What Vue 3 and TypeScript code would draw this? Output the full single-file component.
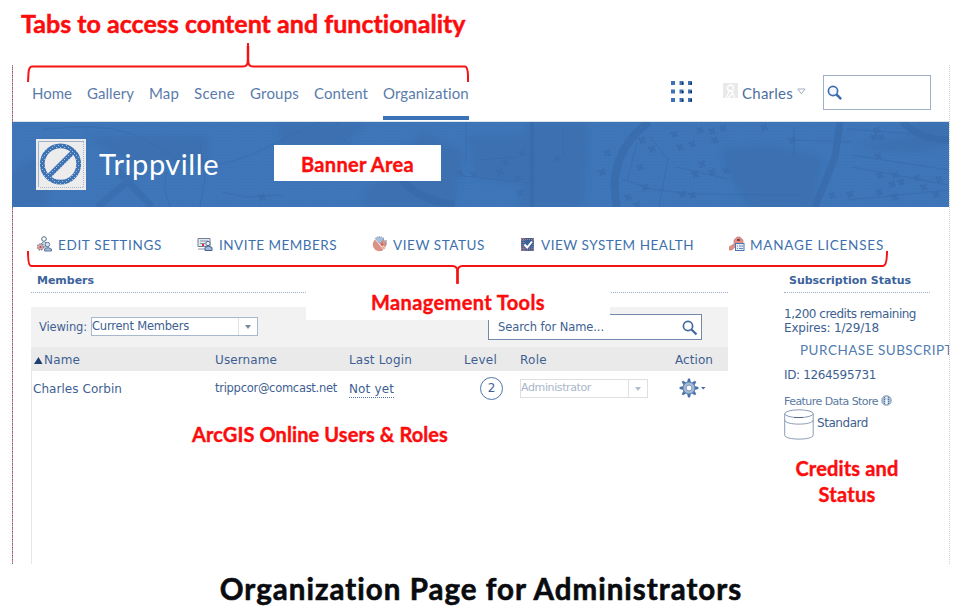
<script setup lang="ts">
interface Label {
  text: string
  width: number
}

const tabs: Label[] = [
  { text: 'Home', width: 40 },
  { text: 'Gallery', width: 47 },
  { text: 'Map', width: 30 },
  { text: 'Scene', width: 41 },
  { text: 'Groups', width: 49 },
  { text: 'Content', width: 54 },
  { text: 'Organization', width: 86 },
]

const columns: Label[] = [
  { text: 'Name', width: 36 },
  { text: 'Username', width: 62 },
  { text: 'Last Login', width: 63 },
  { text: 'Level', width: 33 },
  { text: 'Role', width: 27 },
  { text: 'Action', width: 38 },
]

const dots = [0, 1, 2].flatMap((r) => [0, 1, 2].map((c) => ({ x: c * 8.5, y: r * 8.5 })))
const teeth = [0, 45, 90, 135, 180, 225, 270, 315]

// Scattered tree clusters of the banner's map artwork
const trees: [number, number][] = [
  [448, 51], [462, 52], [488, 50], [508, 71], [630, 18], [640, 27], [628, 45],
  [633, 65], [625, 83], [662, 12], [668, 25], [680, 22], [688, 8], [700, 9], [711, 6], [703, 18], [690, 42],
  [700, 50], [683, 52], [714, 48], [752, 5], [780, 18], [865, 8], [862, 15], [869, 15], [866, 34], [868, 53],
  [883, 53], [889, 60], [880, 62], [905, 56], [912, 65], [927, 57], [820, 73], [838, 72], [867, 70], [883, 75],
  [924, 72], [616, 75], [670, 72], [680, 73], [510, 31], [494, 40], [506, 56], [545, 36], [595, 31], [603, 61],
  [250, 75], [590, 50],
]

// Spreads the letters so that a label fills its set width
const vFit = {
  mounted(el: HTMLElement, binding: { value: number }) {
    const natural = el.getBoundingClientRect().width
    const count = (el.textContent ?? '').trim().length
    el.style.letterSpacing = `${(binding.value - natural) / count}px`
  },
}
</script>

<template>
  <main class="slide">
    <h1 class="lead"><span v-fit="445">Tabs to access content and functionality</span></h1>

    <section class="frame">
      <header class="top">
        <nav class="tabs">
          <a v-for="tab in tabs" :key="tab.text" class="tab" :class="{ active: tab.text === 'Organization' }">
            <span v-fit="tab.width">{{ tab.text }}</span>
          </a>
        </nav>
        <svg class="apps" width="22" height="22" viewBox="0 0 22 22">
          <g v-for="(d, i) in dots" :key="i">
            <rect :x="d.x" :y="d.y" width="4" height="4" fill="#3d73b4" />
            <rect v-if="d.x" :x="d.x + 2.5" :y="d.y + 1.5" width="1.5" height="2" fill="#12244c" />
          </g>
        </svg>
        <div class="user">
          <svg width="15" height="15" viewBox="0 0 15 15">
            <rect width="15" height="15" fill="#e9e9e9" />
            <circle cx="7.5" cy="5" r="3" fill="none" stroke="#fff" stroke-width="1.3" />
            <path d="M3 15 6 8.5h3L12 15M5 15l5-5" fill="none" stroke="#fff" stroke-width="1.2" />
          </svg>
          <span v-fit="51">Charles</span>
          <svg width="9" height="7" viewBox="0 0 9 7">
            <path d="M.8 1h7.2L4.4 5.8z" fill="#fff" stroke="#a5adc0" />
          </svg>
        </div>
        <div class="search">
          <svg width="16" height="16" viewBox="0 0 16 16">
            <circle cx="6" cy="6" r="4.6" fill="#f5f8fc" stroke="#3d6fae" stroke-width="1.7" />
            <path d="m9.5 9.5 4.7 4.7" stroke="#3d6fae" stroke-width="2.5" />
          </svg>
        </div>
      </header>

      <div class="banner">
        <svg class="art" width="937" height="85" viewBox="0 0 937 85">
          <defs>
            <pattern id="grain" width="3" height="3" patternUnits="userSpaceOnUse">
              <rect width="1" height="1" fill="#376ba8" />
            </pattern>
            <g id="tree" fill="#3a6cab">
              <circle r="1.7" /><circle cx="-2.4" cy="-1" r="1.4" /><circle cx="2.3" cy="1.5" r="1.5" />
              <circle cx="1.5" cy="-2.2" r="1.4" /><circle cx="-1" cy="2.6" r="1.3" />
            </g>
            <filter id="soft"><feGaussianBlur stdDeviation="3" /></filter>
          </defs>
          <rect width="937" height="85" fill="url(#grain)" opacity=".4" />
          <g fill="#3a6dac" opacity=".6" filter="url(#soft)">
            <path d="M0 50 35 30v55H0zM75 15h120v28h-75zM265 0h90l-25 22h-60zM350 75 410 10l40 20-8 55h-88z" />
            <path d="M455 14h60V0h60v44l-50 20-60-8zM710 28l50-4 50 12-10 49h-65l-20-40zM845 25l55-10v-15h37v22l-35 8z" />
            <path d="M520 38h55l-5 47h-64z" />
          </g>
          <g fill="none" stroke="#386aaa" opacity=".7">
            <path d="M85 85 125 52M105 48l35 37" stroke-width="7" opacity=".7" />
            <path d="M388 55c10 15 30 25 55 28M605 85c-8-35 5-66 32-85" stroke-width="8" />
            <path d="M828 0 823 35 803 85M890 0c15 14 30 18 47 18" stroke-width="7" />
            <path d="M520 0v85" stroke-width="4" />
            <path
              d="M155 50c-5 15 0 25 3 35M188 20l5 35-5 30M210 70l25 5 35-2M454 0v40M465 38l40-3M450 54l50 5 20 2M551 5v30M610 57l30 10 40 5 110 1M638 15l18 22-9 48M625 20l-10 40M665 45l50 12M782 5v30M780 18l60 2M835 7l70 5M840 33l97 15M840 45l97 18M835 78l102-10"
            />
            <path d="M30 8q80-12 120 20t110-5 65-20M330 16q15 16 50 12" stroke-width="1.5" opacity=".6" />
          </g>
          <use v-for="(t, i) in trees" :key="i" href="#tree" :x="t[0]" :y="t[1]" opacity=".8" />
        </svg>
        <svg class="logo" width="50" height="51" viewBox="0 0 50 51">
          <defs>
            <pattern id="speck" width="4" height="4" patternUnits="userSpaceOnUse">
              <rect width="1" height="1" fill="#a5bedb" /><rect x="2" y="2" width="1" height="1" fill="#a5bedb" />
            </pattern>
          </defs>
          <rect width="50" height="51" fill="#ececed" />
          <path d="M2.5 48V2.5H48" fill="none" stroke="#9fb3ca" />
          <path d="M47.5 3v45.500H3" fill="none" stroke="#a9b7c9" stroke-dasharray="1 1" />
          <g fill="none" stroke-width="4.800">
            <g stroke="#3d73b3"><circle cx="24.500" cy="25" r="18.200" /><path d="M37 13 12 38" /></g>
            <g stroke="url(#speck)"><circle cx="24.500" cy="25" r="18.200" /><path d="M37 13 12 38" /></g>
          </g>
        </svg>
        <h2 class="org"><span v-fit="120">Trippville</span></h2>
        <div class="tag"><span v-fit="113">Banner Area</span></div>
      </div>

      <div class="tools">
        <a class="tool">
          <svg width="17" height="16" viewBox="0 0 17 16">
            <circle cx="8" cy="3" r="2.300" fill="#fff" stroke="#526987" />
            <path d="M5 8 8 5l3 3v3H5z" fill="#c4d0df" stroke="#8292ab" />
            <circle cx="11.500" cy="8.500" r="2.200" fill="#dae4ef" stroke="#6179a0" />
            <path d="M8.500 15v-2q3.500-3 7 0v2z" fill="#a6b9d2" stroke="#6179a0" />
            <circle cx="4.500" cy="11" r="3" fill="#e7a6a0" stroke="#83879f" stroke-width="1.500" stroke-dasharray="1.500 1" />
            <circle cx="4.500" cy="11" r="1" fill="#a54e50" />
          </svg>
          <span v-fit="104">EDIT SETTINGS</span>
        </a>
        <a class="tool">
          <svg width="17" height="16" viewBox="0 0 17 16">
            <path d="M1 2.500h12v8H1z" fill="#e4e9f0" stroke="#718098" />
            <path d="M3 5h8M3 7.500h5M1 13h7" stroke="#8393ab" />
            <circle cx="11" cy="7.500" r="2.200" fill="#e7eef6" stroke="#4f668e" />
            <path d="M8 14.500v-3q3-3 7 0v3z" fill="#a3b9d3" stroke="#3f6595" />
            <path d="M5 9h2" stroke="#e52d2d" stroke-width="2" />
          </svg>
          <span v-fit="118">INVITE MEMBERS</span>
        </a>
        <a class="tool">
          <svg width="16" height="16" viewBox="0 0 16 16">
            <circle cx="7.500" cy="8.500" r="6.700" fill="#dc9185" />
            <path d="M7.500 8.500 3 2.500Q7.500-1 12 2.500z" fill="#a6c0da" stroke="#6585ab" stroke-dasharray="1 1" />
            <path d="m3 3 9 11M7.500 8.500 14 12" stroke="#f4e7e4" stroke-width="1" />
            <path d="M9 7.500h2v2H9z" fill="#e54b43" />
            <path d="M14 4v5" stroke="#73809c" />
          </svg>
          <span v-fit="92">VIEW STATUS</span>
        </a>
        <a class="tool">
          <svg width="14" height="14" viewBox="0 0 14 14">
            <rect width="13" height="13" fill="#3b639b" />
            <path d="M0 12h13M0 10h13M0 1.500h13M1 0v13M3 0v13M12 0v13" stroke="#cf807a" stroke-width=".9" stroke-dasharray="1 1" />
            <path d="m3.500 6.500 2.700 3L11 3.500" fill="none" stroke="#fff" stroke-width="2" />
          </svg>
          <span v-fit="153">VIEW SYSTEM HEALTH</span>
        </a>
        <a class="tool">
          <svg width="16" height="16" viewBox="0 0 16 16">
            <path d="M5 8V4l3-3h3l3 3v4l-3 2H7l-4 4H0v-3z" fill="#df8e83" stroke="#c78078" stroke-width=".7" />
            <path d="M8 4h3" stroke="#56313e" stroke-width="1.500" />
            <rect x="6.500" y="7.500" width="8.500" height="7" fill="#e8eff7" stroke="#4b78b0" />
            <path d="M8 10h1m1 0h4M8 12.500h1m1 0h4" stroke="#648abb" />
          </svg>
          <span v-fit="134">MANAGE LICENSES</span>
        </a>
      </div>

      <div class="body">
        <section class="members">
          <h3 class="heading"><span v-fit="57">Members</span></h3>
          <div class="filters">
            <label v-fit="48">Viewing:</label>
            <div class="select">
              <span v-fit="97">Current Members</span>
              <i class="drop"></i>
            </div>
            <div class="find">
              <span v-fit="106">Search for Name...</span>
              <svg width="16" height="16" viewBox="0 0 16 16">
                <circle cx="6" cy="6" r="4.600" fill="none" stroke="#446a9f" stroke-width="1.700" />
                <path d="m9.500 9.500 5 5" stroke="#446a9f" stroke-width="2.300" />
              </svg>
            </div>
          </div>
          <div class="row head">
            <div v-for="(c, i) in columns" :key="c.text" class="cell">
              <svg v-if="i === 0" width="9" height="9" viewBox="0 0 9 9"><path d="M4.500 1 8.500 8H0z" fill="#1d3c70" /></svg>
              <span v-fit="c.width">{{ c.text }}</span>
            </div>
          </div>
          <div class="records">
            <div class="row">
              <div class="cell person"><span v-fit="89">Charles Corbin</span></div>
              <div class="cell"><span v-fit="122">trippcor@comcast.net</span></div>
              <div class="cell"><span v-fit="45" class="login">Not yet</span></div>
              <div class="cell level"><span class="ring">2</span></div>
              <div class="cell">
                <div class="select role"><span v-fit="70">Administrator</span><i class="drop"></i></div>
              </div>
              <div class="cell action">
                <svg width="27" height="20" viewBox="0 0 27 20">
                  <g fill="#4973aa" stroke="#36649d" stroke-width=".4">
                    <path v-for="a in teeth" :key="a" d="M8.300 4.500 9.200.8h1.600l.9 3.700z" :transform="`rotate(${a} 10 10)`" />
                  </g>
                  <circle cx="10" cy="10" r="4.600" fill="#fff" stroke="#a9bbd3" stroke-width="3.200" />
                  <circle cx="10" cy="10" r="6" fill="none" stroke="#4973aa" stroke-width=".9" />
                  <circle cx="10" cy="10" r="2.900" fill="#fff" stroke="#4973aa" stroke-width=".7" />
                  <path d="M22 9h4.500l-2.200 2.500z" fill="#426fa6" />
                </svg>
              </div>
            </div>
          </div>
        </section>

        <aside class="status">
          <h3 class="heading"><span v-fit="122">Subscription Status</span></h3>
          <p class="credits"><span v-fit="132">1,200 credits remaining</span></p>
          <p class="expires"><span v-fit="95">Expires: 1/29/18</span></p>
          <p class="buy"><span v-fit="153">PURCHASE SUBSCRIPT</span></p>
          <p class="ident"><span v-fit="92">ID: 1264595731</span></p>
          <p class="store">
            <span v-fit="94">Feature Data Store</span>
            <svg width="11" height="11" viewBox="0 0 11 11">
              <circle cx="5.500" cy="5.500" r="4.900" fill="#a8bbd4" stroke="#90a3bd" stroke-width=".8" />
              <path d="M5.500 2v1.500m0 1V9" stroke="#fff" stroke-width="2" />
              <path d="M3.500 2v7m4-7v7" stroke="#476b9f" stroke-dasharray="1 1" />
            </svg>
          </p>
          <div class="plan">
            <svg width="30" height="31" viewBox="0 0 30 31">
              <path d="M.7 4.500v21.700c0 5.200 28.500 5.200 28.500 0V4.500" fill="#fff" stroke="#8b9bb4" />
              <ellipse cx="15" cy="4.700" rx="14.200" ry="3.900" fill="#fff" stroke="#8b9bb4" />
              <path d="M.7 11c0 5.500 28.500 5.500 28.500 0" fill="none" stroke="#8b9bb4" />
              <path d="M10 8.500h9" stroke="#53688a" />
            </svg>
            <span v-fit="51">Standard</span>
          </div>
        </aside>
      </div>
    </section>

    <footer class="caption"><span v-fit="523">Organization Page for Administrators</span></footer>

    <!-- Callouts laid over the page -->
    <div class="callout tools-note"><span v-fit="174">Management Tools</span></div>
    <div class="callout roles-note"><span v-fit="256">ArcGIS Online Users &amp; Roles</span></div>
    <div class="callout credit-note">
      <span v-fit="103">Credits and</span>
      <span v-fit="57">Status</span>
    </div>
    <svg class="braces" width="962" height="300" viewBox="0 0 962 300" fill="none" stroke="#f41414" stroke-width="2">
      <path d="M28 82 28.500 73Q29 66.500 32 66.500H243Q248 66.500 248 60V43V60Q248 66.500 253 66.500H465Q467.500 66.500 468 75V82" />
      <path d="M28 251q0 15 3 15H452.500Q457.500 266 457.500 272V283V272Q457.500 266 462.500 266H883Q887 266 887 251" />
      <path d="M248 62V46M457.500 270v14" stroke-width="2.500" />
    </svg>
  </main>
</template>

<style>
body {
  background: #fff;
}
</style>

<style scoped>
.slide {
  position: relative;
  width: 962px;
  height: 612px;
  overflow: hidden;
  box-sizing: border-box;
  font: 12px/14px 'DejaVu Sans', sans-serif;
  color: #3e5f92;
  white-space: nowrap;
}
.slide *,
.slide *::before {
  box-sizing: border-box;
}
h1,
h2,
h3,
p {
  margin: 0;
}
span,
label {
  display: inline-block;
}
svg {
  display: block;
  flex: none;
}
.lead {
  height: 65px;
  padding: 7px 0 0 21px;
  font: 700 25px/32px Lato, sans-serif;
  color: #fb0d0d;
  -webkit-text-stroke: 0.5px #fb0d0d;
}
.frame {
  width: 938px;
  height: 499px;
  margin-left: 12px;
  padding-left: 1px;
  border-right: 1px dotted #cfcfcf;
  background: repeating-linear-gradient(#c86d6d 0 1px, #eb9f98 1px 2px, #426da5 2px 3px, #cf7875 3px 4px) 0 0 / 1px 100% no-repeat;
  overflow: hidden;
}
.top {
  display: flex;
  height: 57px;
  border-bottom: 1px solid #dde1e8;
}
.tabs {
  display: flex;
  gap: 15px;
  padding: 18px 0 1px 19px;
  width: 658px;
  font: 15px/20px Lato, sans-serif;
  color: #5b7cab;
}
.tab.active {
  height: 37px;
  border-bottom: 4px solid #3b73b9;
}
.apps {
  margin-top: 16px;
}
.user {
  display: flex;
  width: 130px;
  padding: 18px 0 0 30px;
  font: 15px/20px Lato, sans-serif;
  color: #4d6fa2;
}
.user span {
  margin: 0 4px 0 4px;
}
.user svg:last-child {
  margin-top: 5px;
}
.search {
  width: 108px;
  height: 35px;
  margin-top: 10px;
  padding: 9px 3px;
  border: 1px solid #9fb1c9;
}
.banner {
  position: relative;
  display: flex;
  width: 937px;
  height: 85px;
  margin-left: -1px;
  padding: 17px 0 0 24px;
  background: #3e76b9;
}
.art {
  position: absolute;
  inset: 0;
}
.logo,
.org,
.tag {
  position: relative;
}
.org {
  width: 188px;
  padding-left: 13px;
  font: 400 29px/49px Lato, sans-serif;
  color: #fff;
}
.tag {
  width: 167px;
  height: 36px;
  margin-top: 6px;
  background: #fff;
  text-align: center;
  font: 700 20px/38px Lato, sans-serif;
  color: #fb0d0d;
  -webkit-text-stroke: 0.4px #fb0d0d;
}
.tools {
  display: grid;
  grid-template-columns: 161px 175px 149px 208px 160px;
  height: 65px;
  padding: 27px 0 0 23px;
  font: 13.5px/22px Lato, sans-serif;
  color: #3d71ae;
}
.tool {
  display: flex;
  gap: 5px;
}
.tool svg {
  margin-top: 2px;
}
.tool:nth-child(4) svg {
  margin: 4px 1px 0 0;
}
.body {
  display: flex;
  gap: 56px;
  height: 292px;
  padding-left: 18px;
}
.members {
  display: flex;
  flex-direction: column;
  width: 697px;
}
.heading {
  height: 21px;
  padding: 2px 0 0 6px;
  border-bottom: 1px dotted #9cacca;
  font: 700 11px/14px 'DejaVu Sans', sans-serif;
  color: #3c629b;
}
.filters {
  display: flex;
  height: 40px;
  margin-top: 14px;
  padding: 7px 26px 0 8px;
  background: #f2f2f3;
  font-size: 11.5px;
}
.filters label {
  margin-top: 6px;
}
.select {
  display: flex;
  justify-content: space-between;
  width: 167px;
  height: 19px;
  margin: 3px auto 0 4px;
  border: 1px solid #a8b8cd;
  background: #fff;
  font: 11.5px/17px 'DejaVu Sans', sans-serif;
}
.drop {
  width: 19px;
  border-left: 1px solid #dfe3e9;
}
.drop::before {
  content: '';
  display: block;
  margin: 7px 0 0 6px;
  width: 0;
  border: 3.500px solid transparent;
  border-top: 4px solid #7b879d;
  border-bottom: 0;
}
.find {
  display: flex;
  justify-content: space-between;
  width: 214px;
  height: 26px;
  padding: 5px 3px 0 9px;
  border: 1px solid #7289ac;
  background: #fff;
}
.row {
  display: grid;
  grid-template-columns: 184px 134px 115px 56px 155px 53px;
}
.cell {
  display: flex;
}
.head {
  height: 24px;
  padding-top: 6px;
  background: #eaeaeb;
}
.head .cell:first-child {
  padding-left: 3px;
}
.head .cell svg {
  margin: 3px 1px 0 0;
}
.records {
  flex: 1;
  padding-top: 6px;
  border-left: 1px solid #e6e6e6;
}
.records .row {
  grid-template-columns: 183px 134px 131px 40px 159px 48px;
  padding-top: 4px;
  font-size: 11.5px;
}
.records .person,
.records .login {
  font-size: 12px;
}
.person {
  padding: 1px 0 0 1px;
}
.login {
  height: 16px;
  margin-top: 1px;
  border-bottom: 1px dotted #5274a5;
}
.ring {
  width: 23px;
  height: 23px;
  margin-top: -4px;
  border: 1px solid #4d75a9;
  border-radius: 50%;
  text-align: center;
  font-size: 12px;
  line-height: 21px;
}
.role {
  width: 128px;
  margin: -2px 0 0;
  border-color: #dfdfe0;
  color: #a8b6c9;
  font-size: 11px;
  line-height: 15px;
}
.role .drop::before {
  border-top-color: #b3bdcc;
}
.action {
  margin-top: -3px;
}
.status {
  width: 166px;
  overflow: hidden;
}
.status .heading {
  width: 146px;
  padding-left: 5px;
}
.credits {
  padding-top: 14px;
}
.buy {
  padding: 5px 0 0 16px;
  font: 13.5px/21px Lato, sans-serif;
  color: #527cb0;
}
.ident {
  padding-top: 7px;
}
.store {
  display: flex;
  gap: 3px;
  padding-top: 13px;
  font-size: 11px;
  color: #5b789f;
}
.store svg {
  margin-top: 0;
}
.plan {
  display: flex;
  gap: 3px;
}
.plan span {
  margin-top: 7px;
}
.caption {
  padding-top: 7px;
  text-align: center;
  font: 700 29.5px/36px Lato, sans-serif;
  color: #090b0f;
  -webkit-text-stroke: 0.6px #090b0f;
}
.callout {
  position: absolute;
  text-align: center;
  font: 700 20px/26px Lato, sans-serif;
  color: #fb0d0d;
  -webkit-text-stroke: 0.4px #fb0d0d;
}
.tools-note {
  left: 306px;
  top: 275px;
  width: 304px;
  height: 45px;
  padding-top: 14px;
  background: #fff;
}
.roles-note {
  left: 192px;
  top: 421px;
}
.credit-note {
  display: flex;
  flex-direction: column;
  align-items: center;
  left: 790px;
  top: 455px;
  width: 114px;
}
.braces {
  position: absolute;
  inset: 0;
}
</style>
